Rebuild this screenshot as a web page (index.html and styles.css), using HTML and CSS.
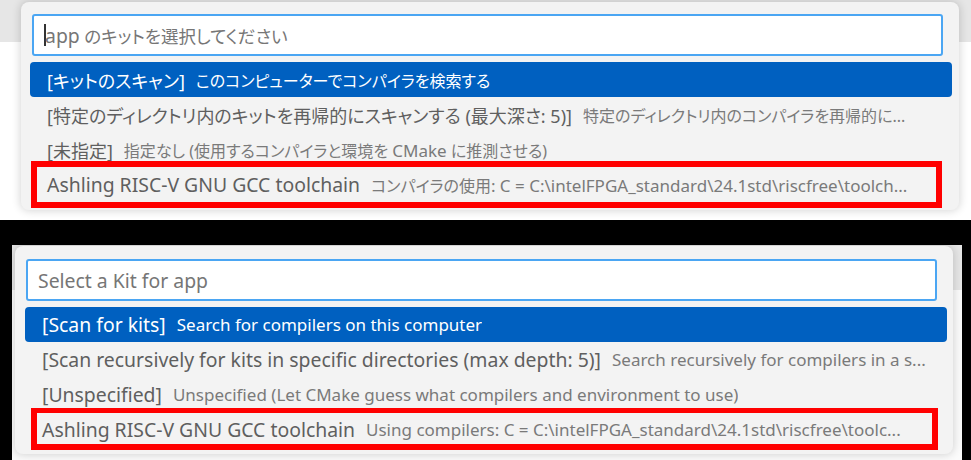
FILE: index.html
```html
<!DOCTYPE html>
<html lang="ja">
<head>
    <meta charset="UTF-8">
    <meta name="viewport" content="width=device-width, initial-scale=1.0">
    <title>キットの選択</title>
    <link rel="stylesheet" href="styles.css">
</head>
<body>
    <div class="shot shot-ja">
        <div class="picker">
            <div class="picker-input">
                <span class="caret"></span>
                <span class="placeholder"><span class="latin">app</span> のキットを選択してください</span>
            </div>
            <ul class="picker-list">
                <li class="item selected"><span class="label">[キットのスキャン]</span><span class="desc">このコンピューターでコンパイラを検索する</span></li>
                <li class="item"><span class="label">[特定のディレクトリ内のキットを再帰的にスキャンする (最大深さ: 5)]</span><span class="desc">特定のディレクトリ内のコンパイラを再帰的に...</span></li>
                <li class="item"><span class="label">[未指定]</span><span class="desc">指定なし (使用するコンパイラと環境を <span class="latin">CMake</span> に推測させる)</span></li>
                <li class="item marked"><span class="label latin">Ashling RISC-V GNU GCC toolchain</span><span class="desc">コンパイラの使用<span class="latin">: C = C:\intelFPGA_standard\24.1std\riscfree\toolch...</span></span></li>
            </ul>
        </div>
    </div>

    <div class="shot shot-en">
        <div class="picker">
            <div class="picker-input">
                <span class="placeholder">Select a Kit for app</span>
            </div>
            <ul class="picker-list">
                <li class="item selected"><span class="label">[Scan for kits]</span><span class="desc">Search for compilers on this computer</span></li>
                <li class="item"><span class="label">[Scan recursively for kits in specific directories (max depth: 5)]</span><span class="desc">Search recursively for compilers in a s...</span></li>
                <li class="item"><span class="label">[Unspecified]</span><span class="desc">Unspecified (Let CMake guess what compilers and environment to use)</span></li>
                <li class="item marked"><span class="label">Ashling RISC-V GNU GCC toolchain</span><span class="desc">Using compilers: C = C:\intelFPGA_standard\24.1std\riscfree\toolc...</span></li>
            </ul>
        </div>
    </div>
</body>
</html>
```

FILE: styles.css
```css
body {
    margin: 0;
    width: 971px;
    height: 460px;
    overflow: hidden;
    background-color: #000;
    font-family: 'Noto Sans', 'Noto Sans CJK JP', sans-serif;
    font-size: 19.4px;
    color: #616161;
}
.shot {
    box-sizing: border-box;
}
.shot-ja {
    height: 220px;
    padding: 2px 12px 0 21px;
    margin-bottom: 25px;
    background: linear-gradient(#e6e6e6 0 42px, #fff 42px);
    font-size: 16px;
    font-feature-settings: "palt";
}
.shot-ja .label {
    font-size: 18px;
}
.shot-ja .placeholder {
    font-size: 17.5px;
}
.shot-ja .latin,
.shot-ja .label.latin {
    font-size: 19.4px;
    font-feature-settings: normal;
}
.shot-ja .desc .latin {
    font-size: 17px;
}
.shot-en {
    width: 950px;
    height: 215px;
    margin-left: 12px;
    padding: 1px 9px 0 3px;
    background: linear-gradient(#e6e6e6 0 45px, #fbfbfb 45px);
}
.shot-en .desc {
    font-size: 17px;
}
.picker {
    box-sizing: border-box;
    width: 938px;
    height: 208px;
    padding: 12px 7px 0 9px;
    background-color: #f3f3f3;
    border-radius: 8px;
    box-shadow: 0 0 8px 1px rgba(0, 0, 0, 0.16);
}
.shot-en .picker {
    padding: 13px 6px 0 10px;
}
.picker-input {
    box-sizing: border-box;
    height: 42px;
    margin: 0 9px 0 2px;
    padding: 0 10px;
    display: flex;
    align-items: center;
    background-color: #fff;
    border: 2px solid #4ba6f3;
    border-radius: 3px;
}
.shot-en .picker-input {
    margin: 0 10px 0 1px;
}
.caret {
    width: 2px;
    height: 22px;
    margin-right: -1px;
    background-color: #333;
}
.placeholder {
    color: #767676;
    white-space: nowrap;
}
.picker-list {
    list-style: none;
    margin: 6px 0 0;
    padding: 0;
}
.item {
    position: relative;
    height: 35px;
    padding: 0 10px 0 17px;
    display: flex;
    align-items: center;
    gap: 11px;
    white-space: nowrap;
    border-radius: 4px;
}
.label {
    flex-shrink: 0;
    color: #5f5f5f;
}
.desc {
    overflow: hidden;
    text-overflow: ellipsis;
    color: #7a7a7a;
}
.item.selected {
    background-color: #0060c0;
}
.item.selected .label,
.item.selected .desc {
    color: #fff;
}
.item.marked::after {
    content: '';
    position: absolute;
    border: 6px solid #ff0000;
}
.shot-ja .item.marked::after {
    left: 1px;
    right: 10px;
    top: -6px;
    bottom: -6px;
}
.shot-en .item.marked::after {
    left: 6px;
    right: 9px;
    top: -4px;
    bottom: -3px;
    border-width: 5px 6px 6px;
}
```
